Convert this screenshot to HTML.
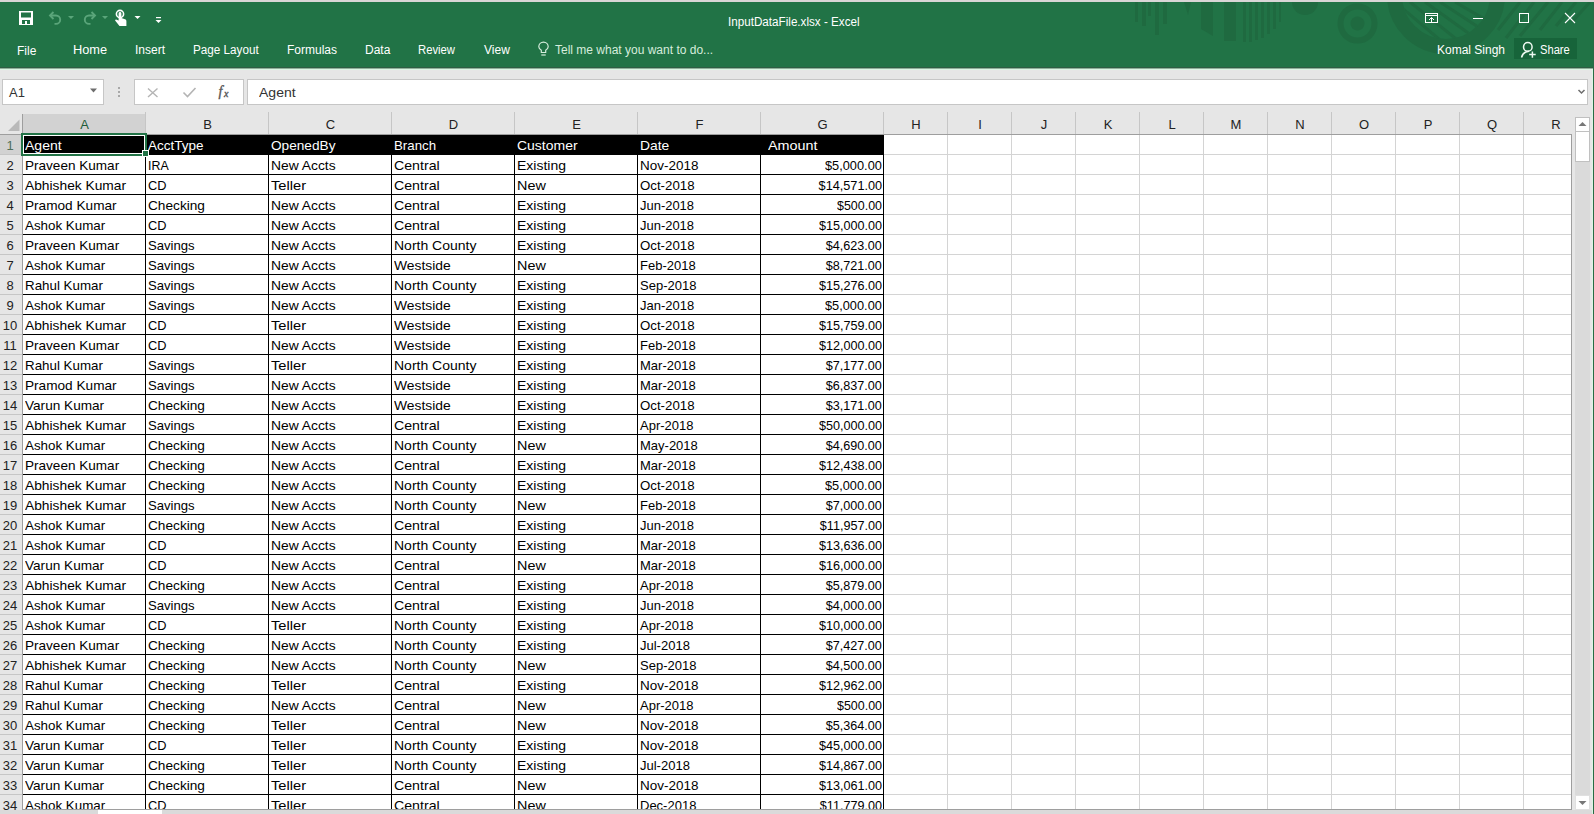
<!DOCTYPE html>
<html><head><meta charset="utf-8">
<style>
*{margin:0;padding:0;box-sizing:border-box}
html,body{width:1594px;height:814px;overflow:hidden;background:#e6e6e6;font-family:"Liberation Sans",sans-serif}
.abs{position:absolute}
#topstrip{position:absolute;left:0;top:0;width:1594px;height:2px;background:#d9d6d6}
#title{position:absolute;left:0;top:2px;width:1594px;height:65px;background:#217346;overflow:hidden}
#title .w{position:absolute;z-index:2;color:#fff;white-space:nowrap;font-size:12px;line-height:14px}
#fbar{position:absolute;left:0;top:67px;width:1594px;height:47px;background:#e6e6e6}
.box{position:absolute;background:#fff;border:1px solid #c6c6c6}
.t{position:absolute;white-space:nowrap;font-size:13px;line-height:16px;transform-origin:0 0}
.t.tr{transform-origin:100% 0}
.rh{position:absolute;left:0;width:22px;background:#e6e6e6;font-size:13px;color:#222}
.rh span{position:absolute;left:0;width:20px;text-align:center;top:3px;line-height:16px}
.rh.sel{background:#d2d2d2}
.rh.sel span{color:#4f6f5a}
.ch{position:absolute;top:114px;height:20px;background:#e6e6e6;font-size:13px;color:#222}
.ch span{position:absolute;left:0;right:0;text-align:center;top:3px;line-height:16px}
.ch.sel{background:#d2d2d2}
.ch.sel span{color:#1f5c38}
.hdrrow{position:absolute;background:#000}
</style></head><body>
<div id="topstrip"></div>
<div id="title">
  <div class="w" style="left:728px;top:13px;transform:scaleX(0.972);transform-origin:0 0">InputDataFile.xlsx - Excel</div>
  <div class="w" style="left:17px;top:42px">File</div>
  <div class="w" style="left:73px;top:41px;transform:scaleX(1.065);transform-origin:0 0">Home</div>
  <div class="w" style="left:135px;top:41px">Insert</div>
  <div class="w" style="left:193px;top:41px;transform:scaleX(0.975);transform-origin:0 0">Page Layout</div>
  <div class="w" style="left:287px;top:41px">Formulas</div>
  <div class="w" style="left:365px;top:41px">Data</div>
  <div class="w" style="left:418px;top:41px;transform:scaleX(0.94);transform-origin:0 0">Review</div>
  <div class="w" style="left:484px;top:41px">View</div>
  <div class="w" style="left:555px;top:41px;color:#d6ecdc">Tell me what you want to do...</div>
  <div class="w" style="left:1437px;top:41px">Komal Singh</div>
    <div class="w" style="left:1540px;top:41px;transform:scaleX(0.93);transform-origin:0 0">Share</div>
</div>

<svg class="abs" style="left:0;top:0" width="1594" height="68">
  <!-- decorative pattern -->
  <g fill="#1f6a40">
    <rect x="1135" y="2" width="3" height="20"/>
    <rect x="1142" y="2" width="4" height="24"/>
    <rect x="1148" y="2" width="3" height="14"/>
    <rect x="1155" y="2" width="4" height="33"/>
    <rect x="1163" y="2" width="4" height="22"/>
    <path d="M1184 2h7l-3 13z"/>
    <path d="M1201 2h12v34l-12-7z"/>
    <rect x="1224" y="2" width="12" height="39"/>
    <rect x="1243" y="2" width="3" height="40"/>
    <rect x="1249" y="2" width="3" height="40"/>
    <rect x="1255" y="2" width="3" height="38"/>
    <rect x="1261" y="2" width="3" height="36"/>
    <rect x="1267" y="2" width="3" height="32"/>
    <rect x="1273" y="2" width="3" height="27"/>
    <rect x="1279" y="2" width="2" height="20"/>
    <path d="M1292 2h26a13 13 0 0 1-26 0z"/>
    <circle cx="1357.5" cy="23.5" r="7"/>
  </g>
  <circle cx="1357.5" cy="23.5" r="17" fill="none" stroke="#1f6a40" stroke-width="6"/>
  <defs><clipPath id="cl1"><circle cx="1446" cy="-5" r="44"/></clipPath><clipPath id="cl2"><rect x="0" y="2" width="1594" height="65"/></clipPath></defs>
  <g clip-path="url(#cl2)">
  <circle cx="1446" cy="-5" r="51.5" fill="none" stroke="#1f6a40" stroke-width="15"/>
  <g clip-path="url(#cl1)" stroke="#1f6a40" stroke-width="3" fill="none">
    <path d="M1395 2 L1440 40"/><path d="M1410 2 L1460 42"/><path d="M1425 2 L1478 40"/><path d="M1440 2 L1492 36"/><path d="M1455 2 L1500 28"/>
  </g>
  <g stroke="#1f6a40" stroke-width="3" fill="none">
    <path d="M1520 2 L1498 30"/><path d="M1534 2 L1506 38"/><path d="M1548 2 L1520 36"/><path d="M1562 2 L1540 30"/><path d="M1576 2 L1556 26"/><path d="M1590 2 L1572 22"/>
  </g>
  </g>
  <!-- save -->
  <rect x="19" y="11" width="14" height="14" fill="#fff"/>
  <rect x="21" y="12.5" width="10" height="5" fill="#217346"/>
  <rect x="22" y="20" width="8" height="4" fill="#217346"/>
  <rect x="25" y="21" width="2" height="3" fill="#fff"/>
  <!-- undo -->
  <g stroke="#5aa57a" stroke-width="1.9" fill="none">
    <path d="M50 15.5 H56 A4.2 4.2 0 0 1 56 23.9 H54.5"/>
    <path d="M53.5 12 L50 15.5 L53.5 19"/>
  </g>
  <g stroke="#5aa57a" stroke-width="1.9" fill="none" transform="translate(145 0) scale(-1 1)">
    <path d="M50 15.5 H56 A4.2 4.2 0 0 1 56 23.9 H54.5"/>
    <path d="M53.5 12 L50 15.5 L53.5 19"/>
  </g>
  <path d="M68 16h6l-3 3z M102 16h6l-3 3z" fill="#5aa57a"/>
  <!-- touch -->
  <circle cx="120" cy="14" r="3.6" fill="none" stroke="#fff" stroke-width="1.6"/>
  <path d="M118.6 13.5 a1.4 1.4 0 0 1 2.8 0 V18 l3.6 1.2 c1 .4 1.4 1 1.4 2 V26 H119.5 L115.3 20.8 c-.4-.6 0-1.4 .8-1.3 l2.5 .9 z" fill="#fff"/>
  <path d="M134.5 16h6l-3 3z" fill="#fff"/>
  <rect x="156" y="17" width="5" height="1.2" fill="#fff"/>
  <path d="M155.5 20h6l-3 3z" fill="#fff"/>
  <!-- lightbulb -->
  <g stroke="#d6ecdc" stroke-width="1.2" fill="none">
    <path d="M541.3 52.5 V50.3 C539.5 49 538.8 47.8 538.8 46.8 A4.7 4.7 0 0 1 548.2 46.8 C548.2 47.8 547.5 49 545.7 50.3 V52.5 Z"/>
    <path d="M541.3 55 H545.7"/>
  </g>
  <!-- window controls -->
  <g stroke="#fff" stroke-width="1" fill="none" shape-rendering="crispEdges">
    <rect x="1425.5" y="13.5" width="12" height="9"/>
    <path d="M1426 15.5 H1437"/>
    <path d="M1473 18.5 H1483"/>
    <rect x="1519.5" y="13.5" width="9" height="9"/>
  </g>
  <path d="M1431.5 22.5 V17.5 M1429 20 L1431.5 17.5 L1434 20" stroke="#fff" fill="none" stroke-width="1"/>
  <path d="M1565 13 L1575 23 M1575 13 L1565 23" stroke="#fff" stroke-width="1.1" fill="none"/>
  <!-- share -->
  <rect x="1514" y="38" width="63" height="21" fill="#17643a"/>
  <g stroke="#eef9f1" stroke-width="1.5" fill="none">
    <circle cx="1527.8" cy="46.9" r="4.3"/>
    <path d="M1521.5 57.5 C1522.5 53.5 1525 51.5 1529 51.2"/>
    <path d="M1529.2 54.5 H1535.7 M1532.4 51.5 V57.8"/>
  </g>
</svg>
<div id="fbar">
  <div class="abs" style="left:0;top:0;width:1594px;height:1px;background:#2d5e43"></div><div class="abs" style="left:0;top:1px;width:1594px;height:1px;background:#8fb09b"></div><div class="abs" style="left:0;top:2px;width:1594px;height:1px;background:#dcf5e4"></div>
  <div class="box" style="left:2px;top:12px;width:102px;height:26px"></div>
  <div class="box" style="left:134px;top:12px;width:110px;height:26px"></div>
  <div class="box" style="left:247px;top:12px;width:1341px;height:26px"></div>
  <div class="abs" style="left:9px;top:18px;font-size:13px;line-height:16px;color:#333;white-space:nowrap">A1</div>
  <div class="abs" style="left:259px;top:18px;font-size:13px;line-height:16px;color:#333;white-space:nowrap;transform:scaleX(1.079);transform-origin:0 0">Agent</div>
</div>
<svg class="abs" style="left:0;top:0" width="1594" height="814">
  <path d="M90 88.5h7l-3.5 4z" fill="#6d6d6d"/>
  <g fill="#a8a8a8"><rect x="118" y="87" width="2" height="2"/><rect x="118" y="91" width="2" height="2"/><rect x="118" y="95" width="2" height="2"/></g>
  <path d="M148 88.5 L157.5 97 M157.5 88.5 L148 97" stroke="#b4b4b4" stroke-width="1.4" fill="none"/>
  <path d="M183.5 92.5 L187.5 96.5 L195.5 88" stroke="#b4b4b4" stroke-width="1.6" fill="none"/>
  <text x="218.5" y="96" font-family="Liberation Serif" font-style="italic" font-size="14" fill="#555" stroke="#555" stroke-width="0.35">f</text>
  <text x="224" y="97" font-family="Liberation Serif" font-style="italic" font-size="10" fill="#555" stroke="#555" stroke-width="0.35">x</text>
  <path d="M1578.5 90 L1581.5 93 L1584.5 90" stroke="#6d6d6d" stroke-width="1.5" fill="none"/>
</svg>
<div class="abs" style="left:0;top:114px;width:1594px;height:700px;background:#e6e6e6"></div>
<div class="abs" style="left:22px;top:135px;width:1550px;height:674px;background:#fff"></div>
<svg class="abs" style="left:0;top:0" width="1594" height="814" shape-rendering="crispEdges"><path d="M883 154.5H1572 M883 174.5H1572 M883 194.5H1572 M883 214.5H1572 M883 234.5H1572 M883 254.5H1572 M883 274.5H1572 M883 294.5H1572 M883 314.5H1572 M883 334.5H1572 M883 354.5H1572 M883 374.5H1572 M883 394.5H1572 M883 414.5H1572 M883 434.5H1572 M883 454.5H1572 M883 474.5H1572 M883 494.5H1572 M883 514.5H1572 M883 534.5H1572 M883 554.5H1572 M883 574.5H1572 M883 594.5H1572 M883 614.5H1572 M883 634.5H1572 M883 654.5H1572 M883 674.5H1572 M883 694.5H1572 M883 714.5H1572 M883 734.5H1572 M883 754.5H1572 M883 774.5H1572 M883 794.5H1572 M947.5 135V809 M1011.5 135V809 M1075.5 135V809 M1139.5 135V809 M1203.5 135V809 M1267.5 135V809 M1331.5 135V809 M1395.5 135V809 M1459.5 135V809 M1523.5 135V809 M883.5 135V155" stroke="#d4d4d4" stroke-width="1" fill="none"/><path d="M22 174.5H884 M22 194.5H884 M22 214.5H884 M22 234.5H884 M22 254.5H884 M22 274.5H884 M22 294.5H884 M22 314.5H884 M22 334.5H884 M22 354.5H884 M22 374.5H884 M22 394.5H884 M22 414.5H884 M22 434.5H884 M22 454.5H884 M22 474.5H884 M22 494.5H884 M22 514.5H884 M22 534.5H884 M22 554.5H884 M22 574.5H884 M22 594.5H884 M22 614.5H884 M22 634.5H884 M22 654.5H884 M22 674.5H884 M22 694.5H884 M22 714.5H884 M22 734.5H884 M22 754.5H884 M22 774.5H884 M22 794.5H884 M145.5 155V809 M268.5 155V809 M391.5 155V809 M514.5 155V809 M637.5 155V809 M760.5 155V809 M883.5 155V809" stroke="#000" stroke-width="1" fill="none"/></svg>
<div class="rh sel" style="top:135px;height:19px"><span>1</span></div>
<div class="rh" style="top:155px;height:19px"><span>2</span></div>
<div class="rh" style="top:175px;height:19px"><span>3</span></div>
<div class="rh" style="top:195px;height:19px"><span>4</span></div>
<div class="rh" style="top:215px;height:19px"><span>5</span></div>
<div class="rh" style="top:235px;height:19px"><span>6</span></div>
<div class="rh" style="top:255px;height:19px"><span>7</span></div>
<div class="rh" style="top:275px;height:19px"><span>8</span></div>
<div class="rh" style="top:295px;height:19px"><span>9</span></div>
<div class="rh" style="top:315px;height:19px"><span>10</span></div>
<div class="rh" style="top:335px;height:19px"><span>11</span></div>
<div class="rh" style="top:355px;height:19px"><span>12</span></div>
<div class="rh" style="top:375px;height:19px"><span>13</span></div>
<div class="rh" style="top:395px;height:19px"><span>14</span></div>
<div class="rh" style="top:415px;height:19px"><span>15</span></div>
<div class="rh" style="top:435px;height:19px"><span>16</span></div>
<div class="rh" style="top:455px;height:19px"><span>17</span></div>
<div class="rh" style="top:475px;height:19px"><span>18</span></div>
<div class="rh" style="top:495px;height:19px"><span>19</span></div>
<div class="rh" style="top:515px;height:19px"><span>20</span></div>
<div class="rh" style="top:535px;height:19px"><span>21</span></div>
<div class="rh" style="top:555px;height:19px"><span>22</span></div>
<div class="rh" style="top:575px;height:19px"><span>23</span></div>
<div class="rh" style="top:595px;height:19px"><span>24</span></div>
<div class="rh" style="top:615px;height:19px"><span>25</span></div>
<div class="rh" style="top:635px;height:19px"><span>26</span></div>
<div class="rh" style="top:655px;height:19px"><span>27</span></div>
<div class="rh" style="top:675px;height:19px"><span>28</span></div>
<div class="rh" style="top:695px;height:19px"><span>29</span></div>
<div class="rh" style="top:715px;height:19px"><span>30</span></div>
<div class="rh" style="top:735px;height:19px"><span>31</span></div>
<div class="rh" style="top:755px;height:19px"><span>32</span></div>
<div class="rh" style="top:775px;height:19px"><span>33</span></div>
<div class="rh" style="top:795px;height:19px"><span>34</span></div>
<div class="ch sel" style="left:23px;width:123px"><span>A</span></div>
<div class="ch" style="left:146px;width:123px"><span>B</span></div>
<div class="ch" style="left:269px;width:123px"><span>C</span></div>
<div class="ch" style="left:392px;width:123px"><span>D</span></div>
<div class="ch" style="left:515px;width:123px"><span>E</span></div>
<div class="ch" style="left:638px;width:123px"><span>F</span></div>
<div class="ch" style="left:761px;width:123px"><span>G</span></div>
<div class="ch" style="left:884px;width:64px"><span>H</span></div>
<div class="ch" style="left:948px;width:64px"><span>I</span></div>
<div class="ch" style="left:1012px;width:64px"><span>J</span></div>
<div class="ch" style="left:1076px;width:64px"><span>K</span></div>
<div class="ch" style="left:1140px;width:64px"><span>L</span></div>
<div class="ch" style="left:1204px;width:64px"><span>M</span></div>
<div class="ch" style="left:1268px;width:64px"><span>N</span></div>
<div class="ch" style="left:1332px;width:64px"><span>O</span></div>
<div class="ch" style="left:1396px;width:64px"><span>P</span></div>
<div class="ch" style="left:1460px;width:64px"><span>Q</span></div>
<div class="ch" style="left:1524px;width:64px"><span>R</span></div>
<div class="hdrrow" style="top:135px;left:22px;width:862px;height:20px"></div>
<div class="t" style="left:25px;top:138px;color:#fff;transform:scaleX(1.0794)">Agent</div>
<div class="t" style="left:148px;top:138px;color:#fff;transform:scaleX(1.0377)">AcctType</div>
<div class="t" style="left:271px;top:138px;color:#fff;transform:scaleX(1.0492)">OpenedBy</div>
<div class="t" style="left:394px;top:138px;color:#fff;transform:scaleX(1.0200)">Branch</div>
<div class="t" style="left:517px;top:138px;color:#fff;transform:scaleX(1.0745)">Customer</div>
<div class="t" style="left:640px;top:138px;color:#fff;transform:scaleX(1.0654)">Date</div>
<div class="t" style="left:768px;top:138px;color:#fff;transform:scaleX(1.1044)">Amount</div>
<div class="t" style="left:25px;top:158px;color:#000;transform:scaleX(1.0427)">Praveen Kumar</div>
<div class="t" style="left:148px;top:158px;color:#000;transform:scaleX(0.9524)">IRA</div>
<div class="t" style="left:271px;top:158px;color:#000;transform:scaleX(1.0644)">New Accts</div>
<div class="t" style="left:394px;top:158px;color:#000;transform:scaleX(1.0900)">Central</div>
<div class="t" style="left:517px;top:158px;color:#000;transform:scaleX(1.0750)">Existing</div>
<div class="t" style="left:640px;top:158px;color:#000;transform:scaleX(1.0364)">Nov-2018</div>
<div class="t tr" style="right:712px;top:158px;color:#000;transform:scaleX(0.9825)">$5,000.00</div>
<div class="t" style="left:25px;top:178px;color:#000;transform:scaleX(1.0600)">Abhishek Kumar</div>
<div class="t" style="left:148px;top:178px;color:#000;transform:scaleX(0.9824)">CD</div>
<div class="t" style="left:271px;top:178px;color:#000;transform:scaleX(1.1290)">Teller</div>
<div class="t" style="left:394px;top:178px;color:#000;transform:scaleX(1.0900)">Central</div>
<div class="t" style="left:517px;top:178px;color:#000;transform:scaleX(1.1080)">New</div>
<div class="t" style="left:640px;top:178px;color:#000;transform:scaleX(1.0192)">Oct-2018</div>
<div class="t tr" style="right:712px;top:178px;color:#000;transform:scaleX(0.9754)">$14,571.00</div>
<div class="t" style="left:25px;top:198px;color:#000;transform:scaleX(1.0477)">Pramod Kumar</div>
<div class="t" style="left:148px;top:198px;color:#000;transform:scaleX(1.0509)">Checking</div>
<div class="t" style="left:271px;top:198px;color:#000;transform:scaleX(1.0644)">New Accts</div>
<div class="t" style="left:394px;top:198px;color:#000;transform:scaleX(1.0900)">Central</div>
<div class="t" style="left:517px;top:198px;color:#000;transform:scaleX(1.0750)">Existing</div>
<div class="t" style="left:640px;top:198px;color:#000;transform:scaleX(0.9963)">Jun-2018</div>
<div class="t tr" style="right:712px;top:198px;color:#000;transform:scaleX(0.9574)">$500.00</div>
<div class="t" style="left:25px;top:218px;color:#000;transform:scaleX(1.0269)">Ashok Kumar</div>
<div class="t" style="left:148px;top:218px;color:#000;transform:scaleX(0.9824)">CD</div>
<div class="t" style="left:271px;top:218px;color:#000;transform:scaleX(1.0644)">New Accts</div>
<div class="t" style="left:394px;top:218px;color:#000;transform:scaleX(1.0900)">Central</div>
<div class="t" style="left:517px;top:218px;color:#000;transform:scaleX(1.0750)">Existing</div>
<div class="t" style="left:640px;top:218px;color:#000;transform:scaleX(0.9963)">Jun-2018</div>
<div class="t tr" style="right:712px;top:218px;color:#000;transform:scaleX(0.9692)">$15,000.00</div>
<div class="t" style="left:25px;top:238px;color:#000;transform:scaleX(1.0427)">Praveen Kumar</div>
<div class="t" style="left:148px;top:238px;color:#000;transform:scaleX(1.0089)">Savings</div>
<div class="t" style="left:271px;top:238px;color:#000;transform:scaleX(1.0644)">New Accts</div>
<div class="t" style="left:394px;top:238px;color:#000;transform:scaleX(1.0763)">North County</div>
<div class="t" style="left:517px;top:238px;color:#000;transform:scaleX(1.0750)">Existing</div>
<div class="t" style="left:640px;top:238px;color:#000;transform:scaleX(1.0192)">Oct-2018</div>
<div class="t tr" style="right:712px;top:238px;color:#000;transform:scaleX(0.9711)">$4,623.00</div>
<div class="t" style="left:25px;top:258px;color:#000;transform:scaleX(1.0269)">Ashok Kumar</div>
<div class="t" style="left:148px;top:258px;color:#000;transform:scaleX(1.0089)">Savings</div>
<div class="t" style="left:271px;top:258px;color:#000;transform:scaleX(1.0644)">New Accts</div>
<div class="t" style="left:394px;top:258px;color:#000;transform:scaleX(1.0660)">Westside</div>
<div class="t" style="left:517px;top:258px;color:#000;transform:scaleX(1.1080)">New</div>
<div class="t" style="left:640px;top:258px;color:#000;transform:scaleX(1.0000)">Feb-2018</div>
<div class="t tr" style="right:712px;top:258px;color:#000;transform:scaleX(0.9711)">$8,721.00</div>
<div class="t" style="left:25px;top:278px;color:#000;transform:scaleX(1.0267)">Rahul Kumar</div>
<div class="t" style="left:148px;top:278px;color:#000;transform:scaleX(1.0089)">Savings</div>
<div class="t" style="left:271px;top:278px;color:#000;transform:scaleX(1.0644)">New Accts</div>
<div class="t" style="left:394px;top:278px;color:#000;transform:scaleX(1.0763)">North County</div>
<div class="t" style="left:517px;top:278px;color:#000;transform:scaleX(1.0750)">Existing</div>
<div class="t" style="left:640px;top:278px;color:#000;transform:scaleX(1.0000)">Sep-2018</div>
<div class="t tr" style="right:712px;top:278px;color:#000;transform:scaleX(0.9711)">$15,276.00</div>
<div class="t" style="left:25px;top:298px;color:#000;transform:scaleX(1.0269)">Ashok Kumar</div>
<div class="t" style="left:148px;top:298px;color:#000;transform:scaleX(1.0089)">Savings</div>
<div class="t" style="left:271px;top:298px;color:#000;transform:scaleX(1.0644)">New Accts</div>
<div class="t" style="left:394px;top:298px;color:#000;transform:scaleX(1.0660)">Westside</div>
<div class="t" style="left:517px;top:298px;color:#000;transform:scaleX(1.0750)">Existing</div>
<div class="t" style="left:640px;top:298px;color:#000;transform:scaleX(1.0000)">Jan-2018</div>
<div class="t tr" style="right:712px;top:298px;color:#000;transform:scaleX(0.9825)">$5,000.00</div>
<div class="t" style="left:25px;top:318px;color:#000;transform:scaleX(1.0600)">Abhishek Kumar</div>
<div class="t" style="left:148px;top:318px;color:#000;transform:scaleX(0.9824)">CD</div>
<div class="t" style="left:271px;top:318px;color:#000;transform:scaleX(1.1290)">Teller</div>
<div class="t" style="left:394px;top:318px;color:#000;transform:scaleX(1.0660)">Westside</div>
<div class="t" style="left:517px;top:318px;color:#000;transform:scaleX(1.0750)">Existing</div>
<div class="t" style="left:640px;top:318px;color:#000;transform:scaleX(1.0192)">Oct-2018</div>
<div class="t tr" style="right:712px;top:318px;color:#000;transform:scaleX(0.9711)">$15,759.00</div>
<div class="t" style="left:25px;top:338px;color:#000;transform:scaleX(1.0427)">Praveen Kumar</div>
<div class="t" style="left:148px;top:338px;color:#000;transform:scaleX(0.9824)">CD</div>
<div class="t" style="left:271px;top:338px;color:#000;transform:scaleX(1.0644)">New Accts</div>
<div class="t" style="left:394px;top:338px;color:#000;transform:scaleX(1.0660)">Westside</div>
<div class="t" style="left:517px;top:338px;color:#000;transform:scaleX(1.0750)">Existing</div>
<div class="t" style="left:640px;top:338px;color:#000;transform:scaleX(1.0000)">Feb-2018</div>
<div class="t tr" style="right:712px;top:338px;color:#000;transform:scaleX(0.9711)">$12,000.00</div>
<div class="t" style="left:25px;top:358px;color:#000;transform:scaleX(1.0267)">Rahul Kumar</div>
<div class="t" style="left:148px;top:358px;color:#000;transform:scaleX(1.0089)">Savings</div>
<div class="t" style="left:271px;top:358px;color:#000;transform:scaleX(1.1290)">Teller</div>
<div class="t" style="left:394px;top:358px;color:#000;transform:scaleX(1.0763)">North County</div>
<div class="t" style="left:517px;top:358px;color:#000;transform:scaleX(1.0750)">Existing</div>
<div class="t" style="left:640px;top:358px;color:#000;transform:scaleX(1.0000)">Mar-2018</div>
<div class="t tr" style="right:712px;top:358px;color:#000;transform:scaleX(0.9711)">$7,177.00</div>
<div class="t" style="left:25px;top:378px;color:#000;transform:scaleX(1.0477)">Pramod Kumar</div>
<div class="t" style="left:148px;top:378px;color:#000;transform:scaleX(1.0089)">Savings</div>
<div class="t" style="left:271px;top:378px;color:#000;transform:scaleX(1.0644)">New Accts</div>
<div class="t" style="left:394px;top:378px;color:#000;transform:scaleX(1.0660)">Westside</div>
<div class="t" style="left:517px;top:378px;color:#000;transform:scaleX(1.0750)">Existing</div>
<div class="t" style="left:640px;top:378px;color:#000;transform:scaleX(1.0000)">Mar-2018</div>
<div class="t tr" style="right:712px;top:378px;color:#000;transform:scaleX(0.9711)">$6,837.00</div>
<div class="t" style="left:25px;top:398px;color:#000;transform:scaleX(1.0461)">Varun Kumar</div>
<div class="t" style="left:148px;top:398px;color:#000;transform:scaleX(1.0509)">Checking</div>
<div class="t" style="left:271px;top:398px;color:#000;transform:scaleX(1.0644)">New Accts</div>
<div class="t" style="left:394px;top:398px;color:#000;transform:scaleX(1.0660)">Westside</div>
<div class="t" style="left:517px;top:398px;color:#000;transform:scaleX(1.0750)">Existing</div>
<div class="t" style="left:640px;top:398px;color:#000;transform:scaleX(1.0192)">Oct-2018</div>
<div class="t tr" style="right:712px;top:398px;color:#000;transform:scaleX(0.9711)">$3,171.00</div>
<div class="t" style="left:25px;top:418px;color:#000;transform:scaleX(1.0600)">Abhishek Kumar</div>
<div class="t" style="left:148px;top:418px;color:#000;transform:scaleX(1.0089)">Savings</div>
<div class="t" style="left:271px;top:418px;color:#000;transform:scaleX(1.0644)">New Accts</div>
<div class="t" style="left:394px;top:418px;color:#000;transform:scaleX(1.0900)">Central</div>
<div class="t" style="left:517px;top:418px;color:#000;transform:scaleX(1.0750)">Existing</div>
<div class="t" style="left:640px;top:418px;color:#000;transform:scaleX(1.0000)">Apr-2018</div>
<div class="t tr" style="right:712px;top:418px;color:#000;transform:scaleX(0.9711)">$50,000.00</div>
<div class="t" style="left:25px;top:438px;color:#000;transform:scaleX(1.0269)">Ashok Kumar</div>
<div class="t" style="left:148px;top:438px;color:#000;transform:scaleX(1.0509)">Checking</div>
<div class="t" style="left:271px;top:438px;color:#000;transform:scaleX(1.0644)">New Accts</div>
<div class="t" style="left:394px;top:438px;color:#000;transform:scaleX(1.0763)">North County</div>
<div class="t" style="left:517px;top:438px;color:#000;transform:scaleX(1.1080)">New</div>
<div class="t" style="left:640px;top:438px;color:#000;transform:scaleX(1.0000)">May-2018</div>
<div class="t tr" style="right:712px;top:438px;color:#000;transform:scaleX(0.9711)">$4,690.00</div>
<div class="t" style="left:25px;top:458px;color:#000;transform:scaleX(1.0427)">Praveen Kumar</div>
<div class="t" style="left:148px;top:458px;color:#000;transform:scaleX(1.0509)">Checking</div>
<div class="t" style="left:271px;top:458px;color:#000;transform:scaleX(1.0644)">New Accts</div>
<div class="t" style="left:394px;top:458px;color:#000;transform:scaleX(1.0900)">Central</div>
<div class="t" style="left:517px;top:458px;color:#000;transform:scaleX(1.0750)">Existing</div>
<div class="t" style="left:640px;top:458px;color:#000;transform:scaleX(1.0000)">Mar-2018</div>
<div class="t tr" style="right:712px;top:458px;color:#000;transform:scaleX(0.9711)">$12,438.00</div>
<div class="t" style="left:25px;top:478px;color:#000;transform:scaleX(1.0600)">Abhishek Kumar</div>
<div class="t" style="left:148px;top:478px;color:#000;transform:scaleX(1.0509)">Checking</div>
<div class="t" style="left:271px;top:478px;color:#000;transform:scaleX(1.0644)">New Accts</div>
<div class="t" style="left:394px;top:478px;color:#000;transform:scaleX(1.0763)">North County</div>
<div class="t" style="left:517px;top:478px;color:#000;transform:scaleX(1.0750)">Existing</div>
<div class="t" style="left:640px;top:478px;color:#000;transform:scaleX(1.0192)">Oct-2018</div>
<div class="t tr" style="right:712px;top:478px;color:#000;transform:scaleX(0.9825)">$5,000.00</div>
<div class="t" style="left:25px;top:498px;color:#000;transform:scaleX(1.0600)">Abhishek Kumar</div>
<div class="t" style="left:148px;top:498px;color:#000;transform:scaleX(1.0089)">Savings</div>
<div class="t" style="left:271px;top:498px;color:#000;transform:scaleX(1.0644)">New Accts</div>
<div class="t" style="left:394px;top:498px;color:#000;transform:scaleX(1.0763)">North County</div>
<div class="t" style="left:517px;top:498px;color:#000;transform:scaleX(1.1080)">New</div>
<div class="t" style="left:640px;top:498px;color:#000;transform:scaleX(1.0000)">Feb-2018</div>
<div class="t tr" style="right:712px;top:498px;color:#000;transform:scaleX(0.9711)">$7,000.00</div>
<div class="t" style="left:25px;top:518px;color:#000;transform:scaleX(1.0269)">Ashok Kumar</div>
<div class="t" style="left:148px;top:518px;color:#000;transform:scaleX(1.0509)">Checking</div>
<div class="t" style="left:271px;top:518px;color:#000;transform:scaleX(1.0644)">New Accts</div>
<div class="t" style="left:394px;top:518px;color:#000;transform:scaleX(1.0900)">Central</div>
<div class="t" style="left:517px;top:518px;color:#000;transform:scaleX(1.0750)">Existing</div>
<div class="t" style="left:640px;top:518px;color:#000;transform:scaleX(0.9963)">Jun-2018</div>
<div class="t tr" style="right:712px;top:518px;color:#000;transform:scaleX(0.9711)">$11,957.00</div>
<div class="t" style="left:25px;top:538px;color:#000;transform:scaleX(1.0269)">Ashok Kumar</div>
<div class="t" style="left:148px;top:538px;color:#000;transform:scaleX(0.9824)">CD</div>
<div class="t" style="left:271px;top:538px;color:#000;transform:scaleX(1.0644)">New Accts</div>
<div class="t" style="left:394px;top:538px;color:#000;transform:scaleX(1.0763)">North County</div>
<div class="t" style="left:517px;top:538px;color:#000;transform:scaleX(1.0750)">Existing</div>
<div class="t" style="left:640px;top:538px;color:#000;transform:scaleX(1.0000)">Mar-2018</div>
<div class="t tr" style="right:712px;top:538px;color:#000;transform:scaleX(0.9711)">$13,636.00</div>
<div class="t" style="left:25px;top:558px;color:#000;transform:scaleX(1.0461)">Varun Kumar</div>
<div class="t" style="left:148px;top:558px;color:#000;transform:scaleX(0.9824)">CD</div>
<div class="t" style="left:271px;top:558px;color:#000;transform:scaleX(1.0644)">New Accts</div>
<div class="t" style="left:394px;top:558px;color:#000;transform:scaleX(1.0900)">Central</div>
<div class="t" style="left:517px;top:558px;color:#000;transform:scaleX(1.1080)">New</div>
<div class="t" style="left:640px;top:558px;color:#000;transform:scaleX(1.0000)">Mar-2018</div>
<div class="t tr" style="right:712px;top:558px;color:#000;transform:scaleX(0.9711)">$16,000.00</div>
<div class="t" style="left:25px;top:578px;color:#000;transform:scaleX(1.0600)">Abhishek Kumar</div>
<div class="t" style="left:148px;top:578px;color:#000;transform:scaleX(1.0509)">Checking</div>
<div class="t" style="left:271px;top:578px;color:#000;transform:scaleX(1.0644)">New Accts</div>
<div class="t" style="left:394px;top:578px;color:#000;transform:scaleX(1.0900)">Central</div>
<div class="t" style="left:517px;top:578px;color:#000;transform:scaleX(1.0750)">Existing</div>
<div class="t" style="left:640px;top:578px;color:#000;transform:scaleX(1.0000)">Apr-2018</div>
<div class="t tr" style="right:712px;top:578px;color:#000;transform:scaleX(0.9711)">$5,879.00</div>
<div class="t" style="left:25px;top:598px;color:#000;transform:scaleX(1.0269)">Ashok Kumar</div>
<div class="t" style="left:148px;top:598px;color:#000;transform:scaleX(1.0089)">Savings</div>
<div class="t" style="left:271px;top:598px;color:#000;transform:scaleX(1.0644)">New Accts</div>
<div class="t" style="left:394px;top:598px;color:#000;transform:scaleX(1.0900)">Central</div>
<div class="t" style="left:517px;top:598px;color:#000;transform:scaleX(1.0750)">Existing</div>
<div class="t" style="left:640px;top:598px;color:#000;transform:scaleX(0.9963)">Jun-2018</div>
<div class="t tr" style="right:712px;top:598px;color:#000;transform:scaleX(0.9711)">$4,000.00</div>
<div class="t" style="left:25px;top:618px;color:#000;transform:scaleX(1.0269)">Ashok Kumar</div>
<div class="t" style="left:148px;top:618px;color:#000;transform:scaleX(0.9824)">CD</div>
<div class="t" style="left:271px;top:618px;color:#000;transform:scaleX(1.1290)">Teller</div>
<div class="t" style="left:394px;top:618px;color:#000;transform:scaleX(1.0763)">North County</div>
<div class="t" style="left:517px;top:618px;color:#000;transform:scaleX(1.0750)">Existing</div>
<div class="t" style="left:640px;top:618px;color:#000;transform:scaleX(1.0000)">Apr-2018</div>
<div class="t tr" style="right:712px;top:618px;color:#000;transform:scaleX(0.9711)">$10,000.00</div>
<div class="t" style="left:25px;top:638px;color:#000;transform:scaleX(1.0427)">Praveen Kumar</div>
<div class="t" style="left:148px;top:638px;color:#000;transform:scaleX(1.0509)">Checking</div>
<div class="t" style="left:271px;top:638px;color:#000;transform:scaleX(1.0644)">New Accts</div>
<div class="t" style="left:394px;top:638px;color:#000;transform:scaleX(1.0763)">North County</div>
<div class="t" style="left:517px;top:638px;color:#000;transform:scaleX(1.0750)">Existing</div>
<div class="t" style="left:640px;top:638px;color:#000;transform:scaleX(1.0000)">Jul-2018</div>
<div class="t tr" style="right:712px;top:638px;color:#000;transform:scaleX(0.9711)">$7,427.00</div>
<div class="t" style="left:25px;top:658px;color:#000;transform:scaleX(1.0600)">Abhishek Kumar</div>
<div class="t" style="left:148px;top:658px;color:#000;transform:scaleX(1.0509)">Checking</div>
<div class="t" style="left:271px;top:658px;color:#000;transform:scaleX(1.0644)">New Accts</div>
<div class="t" style="left:394px;top:658px;color:#000;transform:scaleX(1.0763)">North County</div>
<div class="t" style="left:517px;top:658px;color:#000;transform:scaleX(1.1080)">New</div>
<div class="t" style="left:640px;top:658px;color:#000;transform:scaleX(1.0000)">Sep-2018</div>
<div class="t tr" style="right:712px;top:658px;color:#000;transform:scaleX(0.9711)">$4,500.00</div>
<div class="t" style="left:25px;top:678px;color:#000;transform:scaleX(1.0267)">Rahul Kumar</div>
<div class="t" style="left:148px;top:678px;color:#000;transform:scaleX(1.0509)">Checking</div>
<div class="t" style="left:271px;top:678px;color:#000;transform:scaleX(1.1290)">Teller</div>
<div class="t" style="left:394px;top:678px;color:#000;transform:scaleX(1.0900)">Central</div>
<div class="t" style="left:517px;top:678px;color:#000;transform:scaleX(1.0750)">Existing</div>
<div class="t" style="left:640px;top:678px;color:#000;transform:scaleX(1.0364)">Nov-2018</div>
<div class="t tr" style="right:712px;top:678px;color:#000;transform:scaleX(0.9711)">$12,962.00</div>
<div class="t" style="left:25px;top:698px;color:#000;transform:scaleX(1.0267)">Rahul Kumar</div>
<div class="t" style="left:148px;top:698px;color:#000;transform:scaleX(1.0509)">Checking</div>
<div class="t" style="left:271px;top:698px;color:#000;transform:scaleX(1.0644)">New Accts</div>
<div class="t" style="left:394px;top:698px;color:#000;transform:scaleX(1.0900)">Central</div>
<div class="t" style="left:517px;top:698px;color:#000;transform:scaleX(1.1080)">New</div>
<div class="t" style="left:640px;top:698px;color:#000;transform:scaleX(1.0000)">Apr-2018</div>
<div class="t tr" style="right:712px;top:698px;color:#000;transform:scaleX(0.9574)">$500.00</div>
<div class="t" style="left:25px;top:718px;color:#000;transform:scaleX(1.0269)">Ashok Kumar</div>
<div class="t" style="left:148px;top:718px;color:#000;transform:scaleX(1.0509)">Checking</div>
<div class="t" style="left:271px;top:718px;color:#000;transform:scaleX(1.1290)">Teller</div>
<div class="t" style="left:394px;top:718px;color:#000;transform:scaleX(1.0900)">Central</div>
<div class="t" style="left:517px;top:718px;color:#000;transform:scaleX(1.1080)">New</div>
<div class="t" style="left:640px;top:718px;color:#000;transform:scaleX(1.0364)">Nov-2018</div>
<div class="t tr" style="right:712px;top:718px;color:#000;transform:scaleX(0.9711)">$5,364.00</div>
<div class="t" style="left:25px;top:738px;color:#000;transform:scaleX(1.0461)">Varun Kumar</div>
<div class="t" style="left:148px;top:738px;color:#000;transform:scaleX(0.9824)">CD</div>
<div class="t" style="left:271px;top:738px;color:#000;transform:scaleX(1.1290)">Teller</div>
<div class="t" style="left:394px;top:738px;color:#000;transform:scaleX(1.0763)">North County</div>
<div class="t" style="left:517px;top:738px;color:#000;transform:scaleX(1.0750)">Existing</div>
<div class="t" style="left:640px;top:738px;color:#000;transform:scaleX(1.0364)">Nov-2018</div>
<div class="t tr" style="right:712px;top:738px;color:#000;transform:scaleX(0.9711)">$45,000.00</div>
<div class="t" style="left:25px;top:758px;color:#000;transform:scaleX(1.0461)">Varun Kumar</div>
<div class="t" style="left:148px;top:758px;color:#000;transform:scaleX(1.0509)">Checking</div>
<div class="t" style="left:271px;top:758px;color:#000;transform:scaleX(1.1290)">Teller</div>
<div class="t" style="left:394px;top:758px;color:#000;transform:scaleX(1.0763)">North County</div>
<div class="t" style="left:517px;top:758px;color:#000;transform:scaleX(1.0750)">Existing</div>
<div class="t" style="left:640px;top:758px;color:#000;transform:scaleX(1.0000)">Jul-2018</div>
<div class="t tr" style="right:712px;top:758px;color:#000;transform:scaleX(0.9711)">$14,867.00</div>
<div class="t" style="left:25px;top:778px;color:#000;transform:scaleX(1.0461)">Varun Kumar</div>
<div class="t" style="left:148px;top:778px;color:#000;transform:scaleX(1.0509)">Checking</div>
<div class="t" style="left:271px;top:778px;color:#000;transform:scaleX(1.1290)">Teller</div>
<div class="t" style="left:394px;top:778px;color:#000;transform:scaleX(1.0900)">Central</div>
<div class="t" style="left:517px;top:778px;color:#000;transform:scaleX(1.1080)">New</div>
<div class="t" style="left:640px;top:778px;color:#000;transform:scaleX(1.0364)">Nov-2018</div>
<div class="t tr" style="right:712px;top:778px;color:#000;transform:scaleX(0.9711)">$13,061.00</div>
<div class="t" style="left:25px;top:798px;color:#000;transform:scaleX(1.0269)">Ashok Kumar</div>
<div class="t" style="left:148px;top:798px;color:#000;transform:scaleX(0.9824)">CD</div>
<div class="t" style="left:271px;top:798px;color:#000;transform:scaleX(1.1290)">Teller</div>
<div class="t" style="left:394px;top:798px;color:#000;transform:scaleX(1.0900)">Central</div>
<div class="t" style="left:517px;top:798px;color:#000;transform:scaleX(1.1080)">New</div>
<div class="t" style="left:640px;top:798px;color:#000;transform:scaleX(1.0000)">Dec-2018</div>
<div class="t tr" style="right:712px;top:798px;color:#000;transform:scaleX(0.9711)">$11,779.00</div>
<svg class="abs" style="left:0;top:0" width="1594" height="814" shape-rendering="crispEdges"><path d="M145.5 112V134 M268.5 112V134 M391.5 112V134 M514.5 112V134 M637.5 112V134 M760.5 112V134 M883.5 112V134 M947.5 112V134 M1011.5 112V134 M1075.5 112V134 M1139.5 112V134 M1203.5 112V134 M1267.5 112V134 M1331.5 112V134 M1395.5 112V134 M1459.5 112V134 M1523.5 112V134" stroke="#c6c6c6" fill="none"/><path d="M0 154.5H22 M0 174.5H22 M0 194.5H22 M0 214.5H22 M0 234.5H22 M0 254.5H22 M0 274.5H22 M0 294.5H22 M0 314.5H22 M0 334.5H22 M0 354.5H22 M0 374.5H22 M0 394.5H22 M0 414.5H22 M0 434.5H22 M0 454.5H22 M0 474.5H22 M0 494.5H22 M0 514.5H22 M0 534.5H22 M0 554.5H22 M0 574.5H22 M0 594.5H22 M0 614.5H22 M0 634.5H22 M0 654.5H22 M0 674.5H22 M0 694.5H22 M0 714.5H22 M0 734.5H22 M0 754.5H22 M0 774.5H22 M0 794.5H22 M0 814.5H22" stroke="#c6c6c6" fill="none"/><path d="M0 134.5H1572 M22.5 114V809" stroke="#9e9e9e" fill="none"/></svg>
<div class="abs" style="left:21px;top:133px;width:126px;height:23px;border:2px solid #217346"></div>
<div class="abs" style="left:23px;top:135px;width:122px;height:19px;border:1px solid #fff"></div>
<div class="abs" style="left:142px;top:150px;width:7px;height:7px;background:#217346;border:1px solid #fff"></div>

<svg class="abs" style="left:0;top:0" width="1594" height="814" shape-rendering="crispEdges">
  <path d="M8 131 L19.5 131 L19.5 119.5 Z" fill="#b9b9b9" shape-rendering="auto"/>
  <rect x="1572" y="114" width="22" height="700" fill="#e6e6e6"/>
  <rect x="1575" y="132" width="15" height="664" fill="#dadada"/>
  <rect x="1575.5" y="117.5" width="14" height="14" fill="#fff" stroke="#c0c0c0"/>
  <rect x="1575.5" y="131.5" width="14" height="30" fill="#fff" stroke="#c0c0c0"/>
  <rect x="1575.5" y="795.5" width="14" height="14" fill="#fff" stroke="#e0e0e0"/>
  <path d="M1571.5 135V809" stroke="#9e9e9e"/>
  <path d="M22 809.5H1572" stroke="#9e9e9e"/>
  <rect x="0" y="810" width="1592" height="4" fill="#dadada"/>
  <rect x="98" y="810" width="64" height="4" fill="#fff"/>
  <rect x="1593" y="2" width="1" height="812" fill="#2a6a45"/>
  <rect x="1592" y="69" width="1" height="745" fill="#dcf5e4"/>
</svg>
<svg class="abs" style="left:0;top:0" width="1594" height="814">
  <path d="M1578.5 126 L1582.5 122 L1586.5 126 Z" fill="#777"/>
  <path d="M1578.5 801 L1582.5 805 L1586.5 801 Z" fill="#777"/>
</svg>

</body></html>
